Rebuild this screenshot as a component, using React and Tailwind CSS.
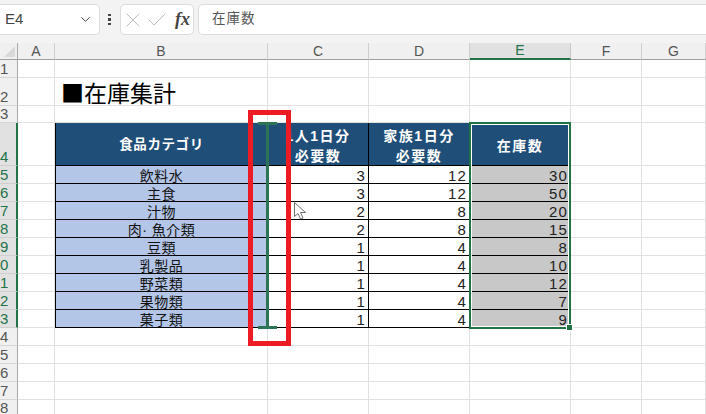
import React from 'react';
import { ChevronDown, Check, X } from 'lucide-react';

const font = "font-['Liberation_Sans','Noto_Sans_CJK_JP',sans-serif]";

const columns = ['A', 'B', 'C', 'D', 'E', 'F', 'G'];

const items = [
    ['飲料水', 3, 12, 30],
    ['主食', 3, 12, 50],
    ['汁物', 2, 8, 20],
    ['肉· 魚介類', 2, 8, 15],
    ['豆類', 1, 4, 8],
    ['乳製品', 1, 4, 10],
    ['野菜類', 1, 4, 12],
    ['果物類', 1, 4, 7],
    ['菓子類', 1, 4, 9],
];

const RowLabel = ({ children, active }) => (
    <div
        className={`flex items-end overflow-hidden text-[15px] leading-[16px] border-r border-b ${
            active
                ? 'bg-[#e1e1e1] text-[#217346] border-r-2 border-r-[#217346] border-b-[#cfcfcf]'
                : 'bg-[#f0f0f0] text-[#555555] border-r-[#a8a8a8] border-b-[#d6d6d6]'
        }`}
    >
        {children}
    </div>
);

const Cell = ({ children, className = '' }) => (
    <div className={`border-r border-b border-[#e1e1e1] min-w-0 ${className}`}>{children}</div>
);

const HeaderCell = ({ children }) => (
    <div className="flex items-center justify-center bg-[#1f4e79] border-r border-b border-black pt-[3px] text-white font-bold text-[14px] leading-[20px] tracking-[1.5px] text-center whitespace-nowrap overflow-hidden">
        <div>{children}</div>
    </div>
);

const numberCell = 'flex items-center justify-end pt-[3px] pr-[2px] border-r border-b border-black text-[15px] tracking-[1.2px] text-[#222222]';

const DataRow = ({ label, item }) => (
    <>
        <RowLabel active>{label}</RowLabel>
        <Cell />
        <div className="flex items-center justify-center bg-[#b4c6e7] border-l border-r border-b border-black pt-[2px] text-[14px] leading-none tracking-[0.5px] text-[#111111] whitespace-nowrap">
            {item[0]}
        </div>
        <div className={`${numberCell} bg-white`}>{item[1]}</div>
        <div className={`${numberCell} bg-white`}>{item[2]}</div>
        <div className={`${numberCell} bg-[#c8c8c8]`}>{item[3]}</div>
        <Cell />
        <Cell />
    </>
);

const EmptyRow = ({ label }) => (
    <>
        <RowLabel>{label}</RowLabel>
        <Cell />
        <Cell />
        <Cell />
        <Cell />
        <Cell />
        <Cell />
        <Cell />
    </>
);

const FormulaBar = () => (
    <div className="flex h-[43px] items-start bg-[#f3f3f3] pt-[4px]">
        <div className="flex h-[31px] w-[100px] items-center justify-between rounded-r-[5px] border border-l-0 border-[#dcdcdc] bg-white pl-[5px] pr-[6px] text-[15px] text-[#444444]">
            <span>E4</span>
            <ChevronDown size={15} strokeWidth={1.6} className="text-[#444444]" />
        </div>
        <div className="flex h-[31px] w-[20px] flex-col items-center justify-center gap-[2px] pr-[1px]">
            <span className="h-[2.5px] w-[2.5px] bg-[#444444]" />
            <span className="h-[2.5px] w-[2.5px] bg-[#444444]" />
            <span className="h-[2.5px] w-[2.5px] bg-[#444444]" />
        </div>
        <div className="flex h-[31px] w-[74px] items-center rounded-[5px] border border-[#dcdcdc] bg-white">
            <X size={24} strokeWidth={0.9} className="text-[#b5b5b5]" />
            <Check size={24} strokeWidth={0.9} className="text-[#b5b5b5]" />
            <span className="ml-[6px] font-['Liberation_Serif',serif] text-[18px] font-bold italic text-[#444444]">fx</span>
        </div>
        <div className="ml-[4px] flex h-[31px] flex-1 items-center rounded-l-[5px] border border-r-0 border-[#dcdcdc] bg-white pl-[13px] text-[13.5px] tracking-[1px] text-[#555555]">
            在庫数
        </div>
    </div>
);

const App = () => {
    return (
        <div className={`relative h-[414px] w-[706px] overflow-hidden bg-white ${font}`}>
            <FormulaBar />

            <div className="grid grid-cols-[18px_37px_213px_101px_101px_101px_71px_64px] grid-rows-[17px_18px_28px_17px_43px_repeat(13,18px)]">
                <div className="flex items-end justify-end bg-[#f0f0f0] border-r border-b border-r-[#a8a8a8] border-b-[#a0a0a0] pb-[2px] pr-[2px]">
                    <div className="h-0 w-0 border-b-[11px] border-l-[11px] border-b-[#d9d9d9] border-l-transparent" />
                </div>
                {columns.map((col) => (
                    <div
                        key={col}
                        className={`flex items-center justify-center text-[14px] ${
                            col === 'E'
                                ? 'bg-[#e1e1e1] text-[#217346] border-r border-r-[#c8c8c8] border-b-2 border-b-[#217346]'
                                : 'bg-[#f0f0f0] text-[#555555] border-r border-r-[#cfcfcf] border-b border-b-[#a0a0a0]'
                        }`}
                    >
                        {col}
                    </div>
                ))}

                <RowLabel>1</RowLabel>
                <Cell /><Cell /><Cell /><Cell /><Cell /><Cell /><Cell />

                <RowLabel>2</RowLabel>
                <Cell />
                <Cell className="flex items-center whitespace-nowrap pl-[6px] pt-[2px] font-['Noto_Sans_CJK_JP',sans-serif] text-[23px] text-black">■在庫集計</Cell>
                <Cell /><Cell /><Cell /><Cell /><Cell />

                <RowLabel>3</RowLabel>
                <Cell /><Cell /><Cell /><Cell /><Cell /><Cell /><Cell />

                <RowLabel active>4</RowLabel>
                <Cell />
                <div className="flex items-center justify-center bg-[#1f4e79] border-l border-r border-b border-black pt-[2px] text-white font-bold text-[13.5px] tracking-[0.6px]">
                    食品カテゴリ
                </div>
                <HeaderCell>1人1日分<br />必要数</HeaderCell>
                <HeaderCell>家族1日分<br />必要数</HeaderCell>
                <HeaderCell>在庫数</HeaderCell>
                <Cell /><Cell />

                {items.map((item, i) => (
                    <DataRow key={item[0]} label={String((i + 5) % 10)} item={item} />
                ))}

                {['4', '5', '6', '7', '8'].map((n) => (
                    <EmptyRow key={n} label={n} />
                ))}
            </div>

            {/* selection around E4:E13 */}
            <div className="absolute left-[469px] top-[122px] h-[207px] w-[102px] border-2 border-[#217346] outline outline-1 -outline-offset-3 outline-white" />
            <div className="absolute left-[567px] top-[325px] h-[5px] w-[5px] bg-[#217346] outline outline-1 outline-white" />

            {/* drag marker for column width */}
            <div className="absolute left-[258px] top-[122px] h-[3px] w-[19px] bg-[#2d7355]" />
            <div className="absolute left-[266px] top-[122px] h-[206px] w-[3px] bg-[#2d7355]" />
            <div className="absolute left-[258px] top-[326px] h-[3px] w-[19px] bg-[#2d7355]" />

            {/* red callout */}
            <div className="absolute left-[248px] top-[110px] h-[236px] w-[43px] border-[5px] border-[#ed1c24]" />

            {/* mouse pointer */}
            <svg className="absolute left-[293px] top-[201px]" width="14" height="20" viewBox="0 0 14 20">
                <path d="M1.5 1.5V15.5L5 12.5L7.5 18L10 17L7.5 11.5H12.5Z" fill="#ffffff" stroke="#707070" strokeWidth="1" />
            </svg>
        </div>
    );
};

export default App;
